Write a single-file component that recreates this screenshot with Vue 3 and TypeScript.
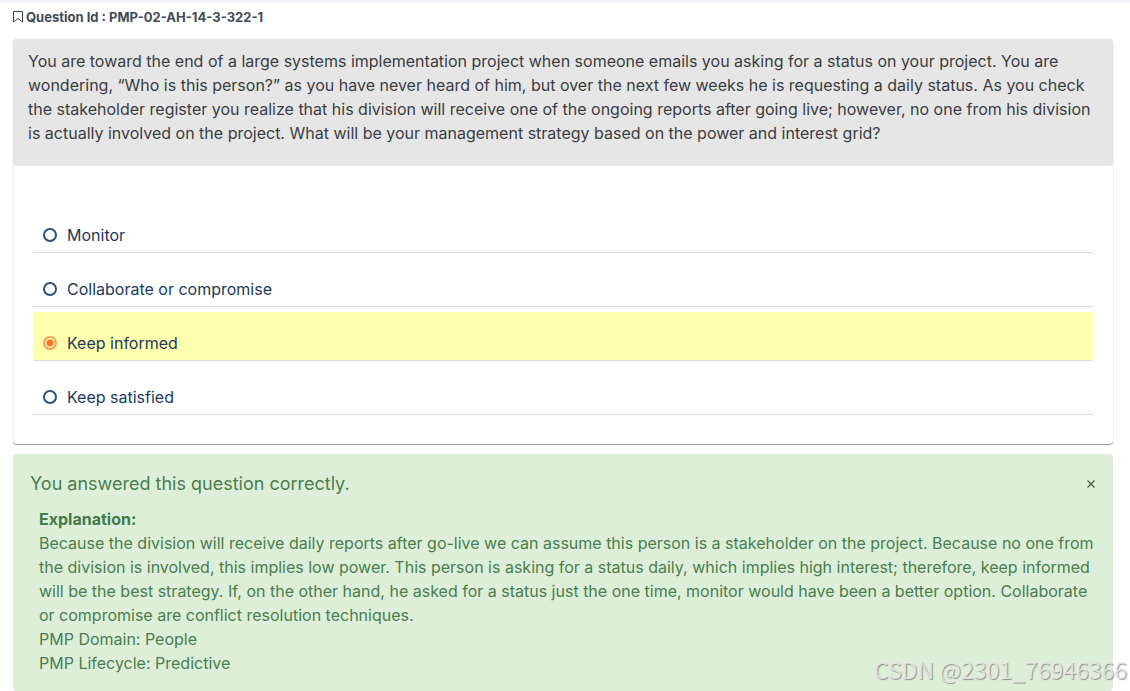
<script setup lang="ts">
import { ref } from 'vue'

interface Option {
  id: string
  label: string
}

const options: Option[] = [
  { id: 'monitor', label: 'Monitor' },
  { id: 'collaborate', label: 'Collaborate or compromise' },
  { id: 'informed', label: 'Keep informed' },
  { id: 'satisfied', label: 'Keep satisfied' },
]

const selected = ref<string>('informed')
const showResult = ref<boolean>(true)
</script>

<template>
  <main class="page">
    <header class="question-id">
      <svg class="bookmark" viewBox="0 0 10 12" aria-hidden="true">
        <path d="M0.5 0.5H9.5V11L5 7.5L0.5 11Z" />
      </svg>
      <h1>Question Id : PMP-02-AH-14-3-322-1</h1>
    </header>

    <section class="card">
      <p id="question" class="question">
        You are toward the end of a large systems implementation project when someone emails you asking for a status on your project. You are wondering, “Who is this person?” as you have never heard of him, but over the next few weeks he is requesting a daily status. As you check the stakeholder register you realize that his division will receive one of the ongoing reports after going live; however, no one from his division is actually involved on the project. What will be your management strategy based on the power and interest grid?
      </p>
      <div class="options" role="radiogroup" aria-labelledby="question">
        <label
          v-for="option in options"
          :key="option.id"
          class="option"
          :class="{ chosen: selected === option.id }"
        >
          <input v-model="selected" type="radio" name="answer" :value="option.id" />
          <span>{{ option.label }}</span>
        </label>
      </div>
    </section>

    <section v-if="showResult" class="result">
      <div class="result-head">
        <h2>You answered this question correctly.</h2>
        <button type="button" class="close" aria-label="Close" @click="showResult = false">
          <svg viewBox="0 0 8 8" aria-hidden="true">
            <path d="M0.5 0.5L7.5 7.5M7.5 0.5L0.5 7.5" />
          </svg>
        </button>
      </div>
      <div class="explanation">
        <strong>Explanation:</strong>
        <p>
          Because the division will receive daily reports after go-live we can assume this person is a stakeholder on the project. Because no one from the division is involved, this implies low power. This person is asking for a status daily, which implies high interest; therefore, keep informed will be the best strategy. If, on the other hand, he asked for a status just the one time, monitor would have been a better option. Collaborate or compromise are conflict resolution techniques.
        </p>
        <p>PMP Domain: People</p>
        <p>PMP Lifecycle: Predictive</p>
      </div>
    </section>

    <div class="watermark">CSDN @2301_76946366</div>
  </main>
</template>

<style>
body {
  margin: 0;
  background: #ffffff;
}
</style>

<style scoped>
.page {
  position: relative;
  box-sizing: border-box;
  padding: 4px 17px 0 13px;
  border-top: 3px solid #f2f3fb;
  font-family: Inter, "Liberation Sans", sans-serif;
  font-size: 16px;
  font-weight: 400;
  line-height: 24px;
  color: #3a3d42;
}

h1,
h2,
p {
  margin: 0;
}

.question-id {
  display: flex;
  align-items: center;
  gap: 3px;
  height: 20px;
  margin-bottom: 12px;
}

.question-id h1 {
  font-size: 13px;
  font-weight: 700;
  line-height: 20px;
  color: #414c56;
}

.bookmark {
  width: 10px;
  height: 12px;
  fill: none;
  stroke: #37424c;
  stroke-width: 1;
}

.card {
  border-radius: 4px;
  background: #ffffff;
  box-shadow: 0 1px 1px rgba(0, 0, 0, 0.4), 0 0 1px rgba(0, 0, 0, 0.2);
}

.question {
  padding: 10px 15px 21px;
  border-radius: 4px;
  background: #e6e6e6;
}

.options {
  display: flex;
  flex-direction: column;
  gap: 5px;
  padding: 38px 20px 29px;
}

.option {
  display: flex;
  align-items: center;
  gap: 10px;
  padding: 19px 10px 5px;
  border-bottom: 1px solid #dcdcdc;
  color: #1b3a5c;
  cursor: pointer;
}

.option.chosen {
  background: #ffffae;
}

.option input {
  appearance: none;
  box-sizing: border-box;
  flex: none;
  width: 14px;
  height: 14px;
  margin: 0;
  border: 2px solid #2a527a;
  border-radius: 50%;
}

.option input:checked {
  border-color: #ff9a58;
  background: radial-gradient(circle, #ff7328 3px, transparent 4px);
}

.result {
  margin-top: 10px;
  padding: 16px 17px;
  border-radius: 4px;
  background: #ddefd8;
  color: #4a7d4f;
}

.result-head {
  display: flex;
  align-items: center;
  justify-content: space-between;
  margin-bottom: 10px;
}

.result-head h2 {
  font-size: 18px;
  font-weight: 400;
  line-height: 27px;
}

.close {
  display: flex;
  padding: 1px;
  border: 0;
  background: none;
  cursor: pointer;
}

.close svg {
  width: 8px;
  height: 8px;
  fill: none;
  stroke: #4c5a46;
  stroke-width: 1.2;
}

.explanation {
  padding: 0 0 0 9px;
}

.explanation strong {
  font-weight: 700;
  color: #42794a;
}

.watermark {
  position: absolute;
  right: 3px;
  bottom: 8px;
  font-family: "Noto Sans CJK SC", sans-serif;
  font-size: 23px;
  font-weight: 400;
  line-height: 28px;
  color: rgba(235, 235, 235, 0.85);
  text-shadow: 1px 1px 1px rgba(90, 90, 90, 0.6);
  pointer-events: none;
}
</style>
